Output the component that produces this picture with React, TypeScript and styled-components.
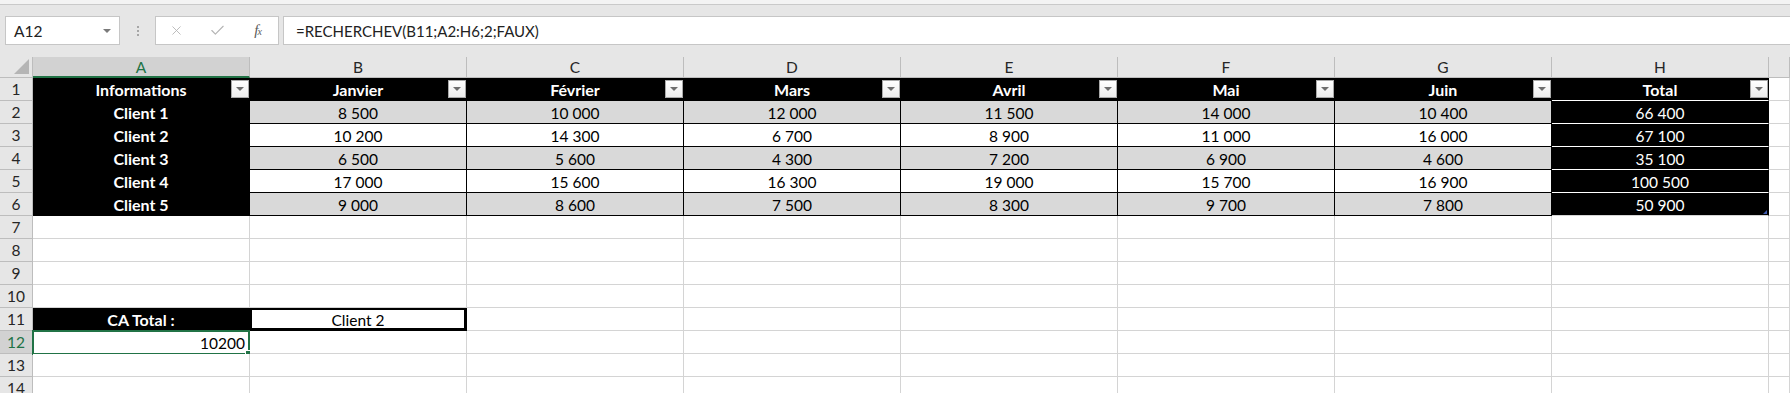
import React from "react";
import styled, { createGlobalStyle } from "styled-components";
import { X, Check } from "lucide-react";

const GRID = "#d4d4d4";
const HEAD_LINE = "#bdbdbd";
const GREEN = "#217346";
const BLACK = "#000000";

const GlobalStyle = createGlobalStyle`
  html, body { margin: 0; padding: 0; background: #ffffff; }
  body { font-family: Lato, "Liberation Sans", Arial, sans-serif; overflow: hidden; }
`;

const Window = styled.div`
  width: 1790px;
  height: 393px;
  overflow: hidden;
  display: flex;
  flex-direction: column;
  background: #ffffff;
`;

const RibbonEdge = styled.div`
  flex: none;
  height: 4px;
  background: #f3f3f3;
  border-bottom: 1px solid #c9c9c9;
`;

const FormulaBar = styled.div`
  flex: none;
  height: 52px;
  box-sizing: border-box;
  padding: 11px 0 0 5px;
  background: #e6e6e6;
  display: flex;
  align-items: flex-start;
`;

const NameBox = styled.div`
  width: 115px;
  height: 29px;
  box-sizing: border-box;
  border: 1px solid #c6c6c6;
  background: #ffffff;
  display: flex;
  align-items: center;
  padding: 0 8px 0 8px;
  font-size: 15.5px;
  color: #222222;
`;

const Caret = styled.span`
  margin-left: auto;
  width: 0;
  height: 0;
  border-left: 4px solid transparent;
  border-right: 4px solid transparent;
  border-top: 4px solid #7a7a7a;
`;

const Grip = styled.div`
  width: 35px;
  height: 29px;
  display: flex;
  flex-direction: column;
  align-items: center;
  justify-content: center;
  gap: 2px;
`;

const GripDot = styled.span`
  width: 2px;
  height: 2px;
  background: #a6a6a6;
`;

const FxGroup = styled.div`
  width: 124px;
  height: 29px;
  box-sizing: border-box;
  border: 1px solid #c6c6c6;
  background: #ffffff;
  display: flex;
`;

const FxSlot = styled.div`
  flex: 1;
  display: flex;
  align-items: center;
  justify-content: center;
  color: #b4b4b4;
`;

const FxGlyph = styled.span`
  font-family: "Liberation Serif", "DejaVu Serif", serif;
  font-style: italic;
  font-size: 15px;
  color: #5a5a5a;
  letter-spacing: -1px;
  & > small {
    font-size: 10px;
  }
`;

const FormulaInput = styled.div`
  flex: 1;
  margin-left: 4px;
  height: 29px;
  box-sizing: border-box;
  border: 1px solid #c6c6c6;
  border-right: none;
  background: #ffffff;
  display: flex;
  align-items: center;
  padding-left: 12px;
  font-size: 15px;
  color: #222222;
  white-space: nowrap;
`;

const Sheet = styled.div`
  flex: 1;
  display: grid;
  grid-template-columns: 33px repeat(8, 217px) 1fr;
  grid-template-rows: 21px;
  grid-auto-rows: 23px;
  overflow: hidden;
`;

const Corner = styled.div`
  position: relative;
  background: #e6e6e6;
  box-sizing: border-box;
  border-right: 1px solid ${HEAD_LINE};
  border-bottom: 1px solid ${HEAD_LINE};
  &::after {
    content: "";
    position: absolute;
    right: 3px;
    bottom: 3px;
    width: 15px;
    height: 15px;
    background: #b5b5b5;
    clip-path: polygon(100% 0, 100% 100%, 0 100%);
  }
`;

const ColHead = styled.div<{ $selected?: boolean }>`
  background: ${(p) => (p.$selected ? "#d2d2d2" : "#e6e6e6")};
  color: ${(p) => (p.$selected ? GREEN : "#262626")};
  box-sizing: border-box;
  border-right: 1px solid ${HEAD_LINE};
  border-bottom: ${(p) => (p.$selected ? `2px solid ${GREEN}` : `1px solid ${HEAD_LINE}`)};
  display: flex;
  align-items: center;
  justify-content: center;
  font-size: 15.5px;
`;

const RowHead = styled.div<{ $selected?: boolean }>`
  background: ${(p) => (p.$selected ? "#d2d2d2" : "#e6e6e6")};
  color: ${(p) => (p.$selected ? GREEN : "#262626")};
  box-sizing: border-box;
  border-right: 1px solid ${HEAD_LINE};
  border-bottom: 1px solid ${HEAD_LINE};
  display: flex;
  align-items: center;
  justify-content: center;
  font-size: 15.5px;
`;

type Align = "center" | "right" | "left";

const Cell = styled.div<{
  $fill: string;
  $ink: string;
  $bold?: boolean;
  $align: Align;
  $rb: string;
  $bb: string;
  $frame?: boolean;
}>`
  position: relative;
  box-sizing: border-box;
  background: ${(p) => p.$fill};
  color: ${(p) => p.$ink};
  font-weight: ${(p) => (p.$bold ? 700 : 400)};
  font-size: ${(p) => (p.$bold ? "16px" : "15.5px")};
  border-right: 1px solid ${(p) => p.$rb};
  border-bottom: 1px solid ${(p) => p.$bb};
  box-shadow: ${(p) => (p.$frame ? "inset 0 0 0 2px #000" : "none")};
  display: flex;
  align-items: center;
  justify-content: ${(p) =>
    p.$align === "center" ? "center" : p.$align === "right" ? "flex-end" : "flex-start"};
  padding: 1px 4px 0 4px;
  white-space: nowrap;
`;

const FilterButton = styled.span`
  position: absolute;
  top: 2px;
  right: 0;
  width: 18px;
  height: 18px;
  box-sizing: border-box;
  border: 1px solid #a9a9a9;
  background: linear-gradient(#ffffff, #ececec);
  display: flex;
  align-items: center;
  justify-content: center;
  &::after {
    content: "";
    width: 0;
    height: 0;
    border-left: 4px solid transparent;
    border-right: 4px solid transparent;
    border-top: 4px solid #6e6e6e;
  }
`;

const Selection = styled.span`
  position: absolute;
  left: -1px;
  top: -1px;
  right: -1px;
  bottom: -2px;
  border: 2px solid ${GREEN};
  pointer-events: none;
  &::after {
    content: "";
    position: absolute;
    right: -4px;
    bottom: -4px;
    width: 5px;
    height: 5px;
    background: ${GREEN};
    border: 1px solid #ffffff;
  }
`;

const ResizeHandle = styled.span`
  position: absolute;
  right: 1px;
  bottom: 1px;
  width: 4px;
  height: 4px;
  background: #3f5bb0;
  clip-path: polygon(100% 0, 100% 100%, 0 100%);
`;

type CellSpec = {
  text?: string;
  fill?: string;
  ink?: string;
  bold?: boolean;
  align?: Align;
  rb?: string;
  bb?: string;
  filter?: boolean;
  frame?: boolean;
  selected?: boolean;
  handle?: boolean;
};

const COLS = ["A", "B", "C", "D", "E", "F", "G", "H"];
const HEADERS = ["Informations", "Janvier", "Février", "Mars", "Avril", "Mai", "Juin", "Total"];
const DATA: string[][] = [
  ["8 500", "10 000", "12 000", "11 500", "14 000", "10 400", "66 400"],
  ["10 200", "14 300", "6 700", "8 900", "11 000", "16 000", "67 100"],
  ["6 500", "5 600", "4 300", "7 200", "6 900", "4 600", "35 100"],
  ["17 000", "15 600", "16 300", "19 000", "15 700", "16 900", "100 500"],
  ["9 000", "8 600", "7 500", "8 300", "9 700", "7 800", "50 900"],
];

function buildRows(): CellSpec[][] {
  const rows: CellSpec[][] = [];
  const blank = (): CellSpec => ({});
  rows.push(
    HEADERS.map((h, i) => ({
      text: h,
      fill: BLACK,
      ink: "#ffffff",
      bold: true,
      rb: BLACK,
      bb: i === 7 ? "#ffffff" : BLACK,
      filter: true,
    }))
  );
  DATA.forEach((vals, r) => {
    const row: CellSpec[] = [
      { text: `Client ${r + 1}`, fill: BLACK, ink: "#ffffff", bold: true, rb: BLACK, bb: BLACK },
    ];
    vals.forEach((v, c) => {
      if (c === 6) {
        row.push({
          text: v,
          fill: BLACK,
          ink: "#ffffff",
          rb: BLACK,
          bb: r === 4 ? GRID : "#ffffff",
          handle: r === 4,
        });
      } else {
        row.push({
          text: v,
          fill: r % 2 === 0 ? "#d9d9d9" : "#ffffff",
          ink: "#000000",
          rb: BLACK,
          bb: BLACK,
        });
      }
    });
    rows.push(row);
  });
  for (let i = 0; i < 4; i++) rows.push(COLS.map(blank));
  rows.push([
    { text: "CA Total :", fill: BLACK, ink: "#ffffff", bold: true, rb: BLACK, bb: BLACK },
    { text: "Client 2", frame: true, rb: BLACK, bb: BLACK },
    ...COLS.slice(2).map(blank),
  ]);
  rows.push([
    { text: "10200", align: "right", selected: true },
    ...COLS.slice(1).map(blank),
  ]);
  rows.push(COLS.map(blank));
  rows.push(COLS.map(blank));
  return rows;
}

const ROWS = buildRows();

export default function App() {
  return (
    <Window>
      <GlobalStyle />
      <RibbonEdge />
      <FormulaBar>
        <NameBox>
          A12
          <Caret />
        </NameBox>
        <Grip>
          <GripDot />
          <GripDot />
          <GripDot />
        </Grip>
        <FxGroup>
          <FxSlot>
            <X size={15} strokeWidth={1.4} />
          </FxSlot>
          <FxSlot>
            <Check size={17} strokeWidth={1.6} />
          </FxSlot>
          <FxSlot>
            <FxGlyph>
              f<small>x</small>
            </FxGlyph>
          </FxSlot>
        </FxGroup>
        <FormulaInput>=RECHERCHEV(B11;A2:H6;2;FAUX)</FormulaInput>
      </FormulaBar>
      <Sheet>
        <Corner />
        {COLS.map((c) => (
          <ColHead key={c} $selected={c === "A"}>
            {c}
          </ColHead>
        ))}
        <ColHead />
        {ROWS.map((row, r) => (
          <React.Fragment key={r}>
            <RowHead $selected={r === 11}>{r + 1}</RowHead>
            {row.map((cell, c) => (
              <Cell
                key={c}
                $fill={cell.fill ?? "#ffffff"}
                $ink={cell.ink ?? "#000000"}
                $bold={cell.bold}
                $align={cell.align ?? "center"}
                $rb={cell.rb ?? GRID}
                $bb={cell.bb ?? GRID}
                $frame={cell.frame}
              >
                {cell.text}
                {cell.filter && <FilterButton />}
                {cell.selected && <Selection />}
                {cell.handle && <ResizeHandle />}
              </Cell>
            ))}
            <Cell $fill="#ffffff" $ink="#000" $align="center" $rb={GRID} $bb={GRID} />
          </React.Fragment>
        ))}
      </Sheet>
    </Window>
  );
}
